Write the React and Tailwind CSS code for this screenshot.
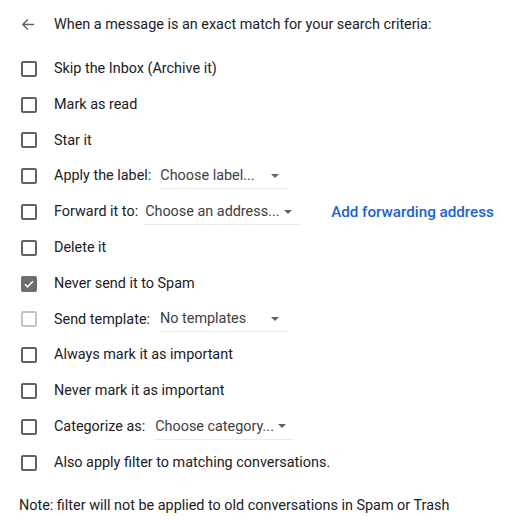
import React from "react"

function Box({ checked, disabled }) {
  if (checked) {
    return (
      <span className="flex h-[16px] w-[16px] items-center justify-center rounded-[2px] bg-[#6e6e6e]">
        <svg width="12" height="12" viewBox="0 0 24 24" fill="none" stroke="white" strokeWidth="3.2">
          <path d="M4 12.5l5 5L20 6.5" />
        </svg>
      </span>
    )
  }
  return (
    <span
      className={`block h-[16px] w-[16px] rounded-[2px] border-2 ${
        disabled ? "border-[#c4c4c4]" : "border-[#5f6368]"
      }`}
    />
  )
}

function Select({ text, width }) {
  return (
    <span
      className="flex h-[26px] items-center justify-between border-b border-[#ebebeb] pl-[1px] pr-[8px] text-[#3c4043]"
      style={{ width }}
    >
      <span>{text}</span>
      <svg width="8" height="4" viewBox="0 0 10 5">
        <path d="M0 0l5 5 5-5z" fill="#5f6368" />
      </svg>
    </span>
  )
}

const rows = [
  { label: "Skip the Inbox (Archive it)" },
  { label: "Mark as read" },
  { label: "Star it" },
  { label: "Apply the label:", select: "Choose label...", w: 128, gap: "ml-[8px]" },
  { label: "Forward it to:", select: "Choose an address...", w: 156, gap: "ml-[6px]", link: true },
  { label: "Delete it" },
  { label: "Never send it to Spam", checked: true },
  { label: "Send template:", select: "No templates", w: 128, gap: "ml-[9px]", disabled: true },
  { label: "Always mark it as important" },
  { label: "Never mark it as important" },
  { label: "Categorize as:", select: "Choose category...", w: 140, gap: "ml-[9px]" },
  { label: "Also apply filter to matching conversations." },
]

export default function App() {
  return (
    <div className="h-[520px] w-[520px] bg-white text-[14.4px] text-[#202124]" style={{ fontFamily: "Roboto, Arial, sans-serif" }}>
      <div className="flex h-[49px] items-center">
        <span className="ml-[20px] flex w-[34px] items-center">
          <svg width="17" height="17" viewBox="0 0 24 24" fill="none" stroke="#5f6368" strokeWidth="2">
            <path d="M20 12H4M11 5l-7 7 7 7" />
          </svg>
        </span>
        <span>When a message is an exact match for your search criteria:</span>
      </div>
      <div className="mt-[2px] flex flex-col">
        {rows.map((r) => (
          <div key={r.label} className="flex h-[35.8px] items-center">
            <span className="ml-[21px] w-[33px]">
              <Box checked={r.checked} disabled={r.disabled} />
            </span>
            <span>{r.label}</span>
            {r.select && (
              <span className={r.gap}>
                <Select text={r.select} width={r.w} />
              </span>
            )}
            {r.link && (
              <span className="ml-[31px] text-[15.2px] font-medium text-[#1a62d6]">Add forwarding address</span>
            )}
          </div>
        ))}
      </div>
      <p className="ml-[19px] mt-[15px] leading-[20px]">Note: filter will not be applied to old conversations in Spam or Trash</p>
    </div>
  )
}
